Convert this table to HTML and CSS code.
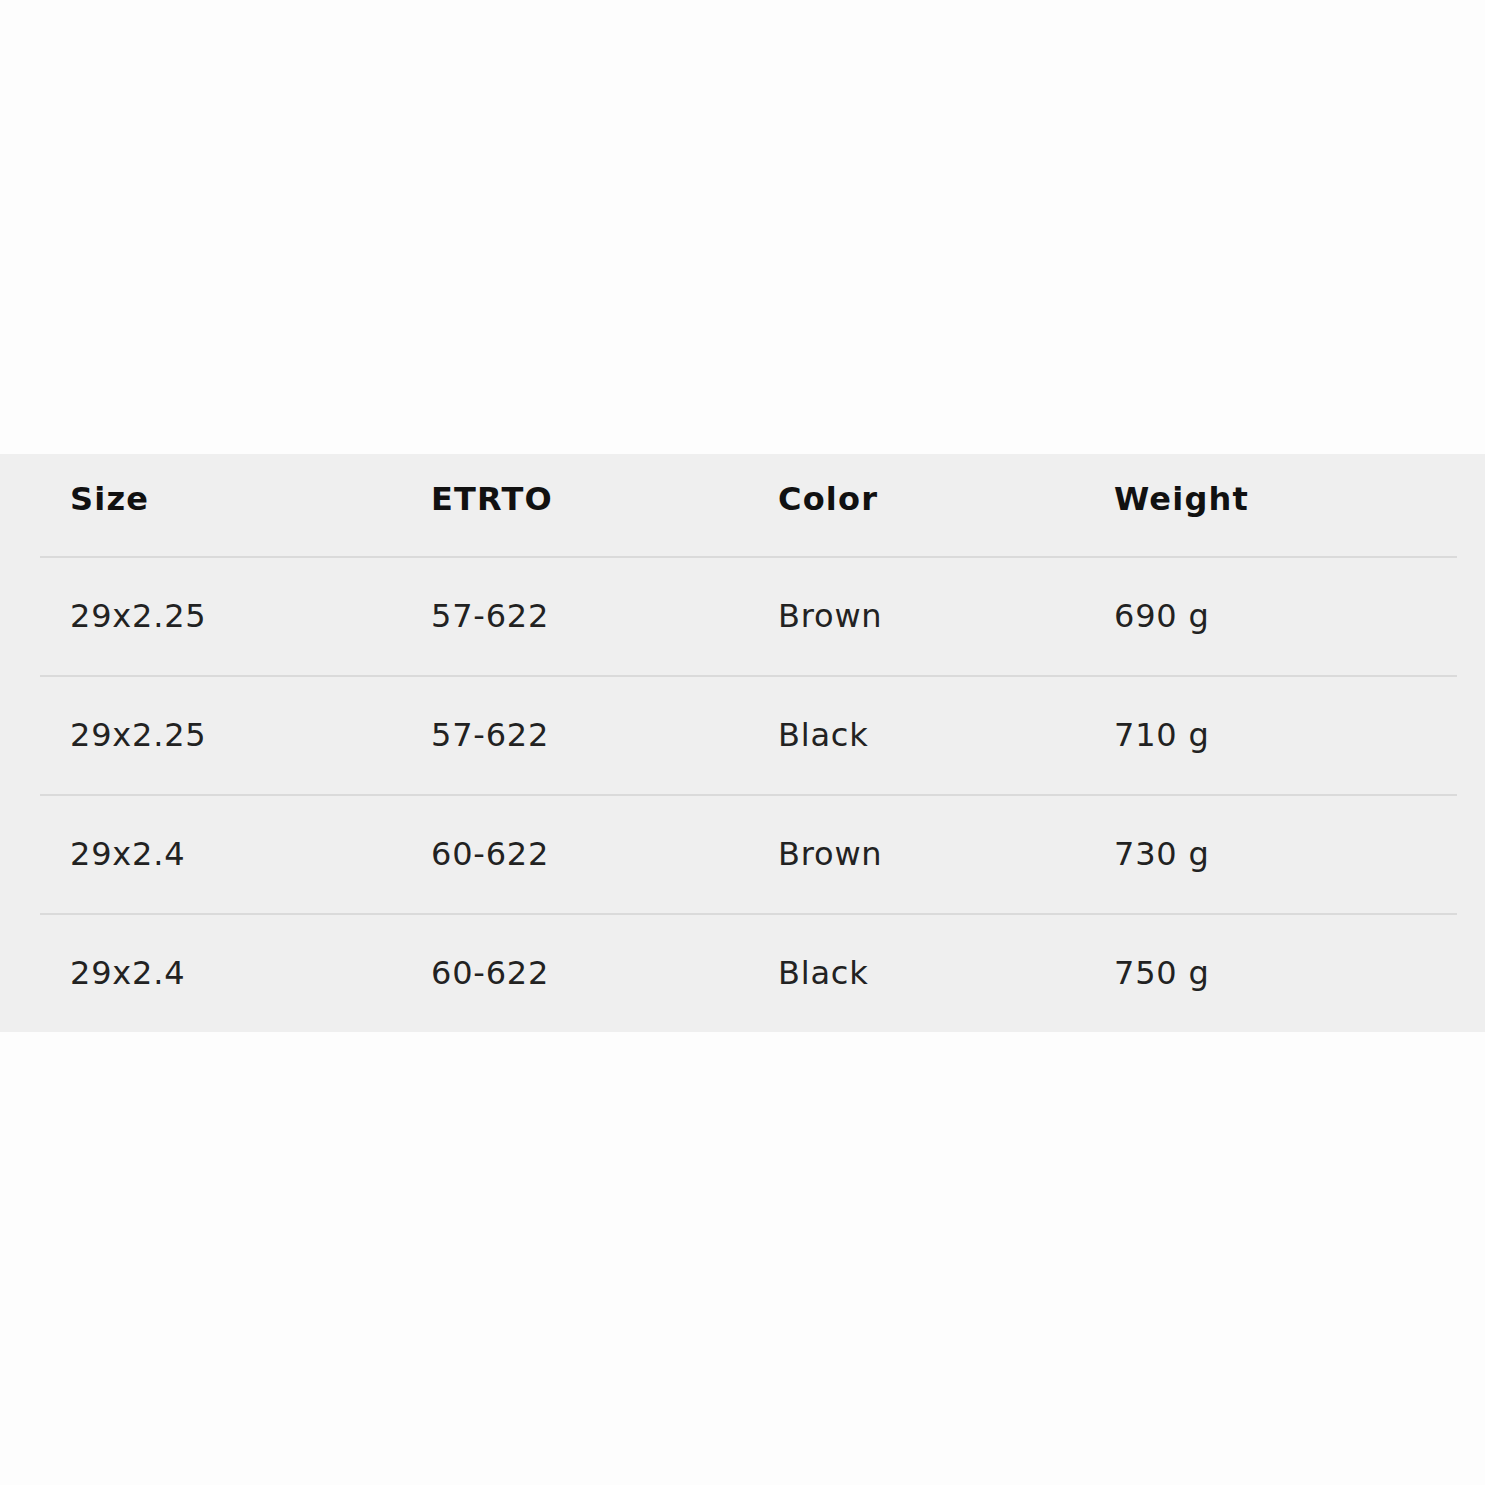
FILE: index.html
```html
<!DOCTYPE html>
<html lang="en">
<head>
<meta charset="utf-8">
<title>Tire sizes</title>
<link rel="stylesheet" href="styles.css">
</head>
<body>
<div class="panel">
  <table class="specs">
    <thead>
      <tr><th class="c1">Size</th><th class="c2">ETRTO</th><th class="c3">Color</th><th class="c4">Weight</th></tr>
    </thead>
    <tbody>
      <tr><td>29x2.25</td><td>57-622</td><td>Brown</td><td>690 g</td></tr>
      <tr><td>29x2.25</td><td>57-622</td><td>Black</td><td>710 g</td></tr>
      <tr><td>29x2.4</td><td>60-622</td><td>Brown</td><td>730 g</td></tr>
      <tr><td>29x2.4</td><td>60-622</td><td>Black</td><td>750 g</td></tr>
    </tbody>
  </table>
</div>
</body>
</html>
```

FILE: styles.css
```css
html, body {
  margin: 0;
  padding: 0;
}
body {
  background: #fdfdfd;
  min-height: 100vh;
  display: flex;
  flex-direction: column;
  justify-content: center;
  font-family: "DejaVu Sans", "Open Sans", sans-serif;
}
.panel {
  background: #efefef;
  padding: 0 28px 0 40px;
}
.specs {
  width: 100%;
  border-collapse: collapse;
  table-layout: fixed;
}
.specs th,
.specs td {
  text-align: left;
  padding: 0 0 0 30px;
  font-size: 32px;
  white-space: nowrap;
}
.specs th {
  height: 103px;
  padding-bottom: 12px;
  box-sizing: border-box;
  font-weight: bold;
  letter-spacing: 1.2px;
  color: #111;
}
.specs td {
  height: 117px;
  border-top: 2px solid #dadada;
  letter-spacing: 0.8px;
  color: #222;
}
.c1 { width: 361px; }
.c2 { width: 347px; }
.c3 { width: 336px; }
```
